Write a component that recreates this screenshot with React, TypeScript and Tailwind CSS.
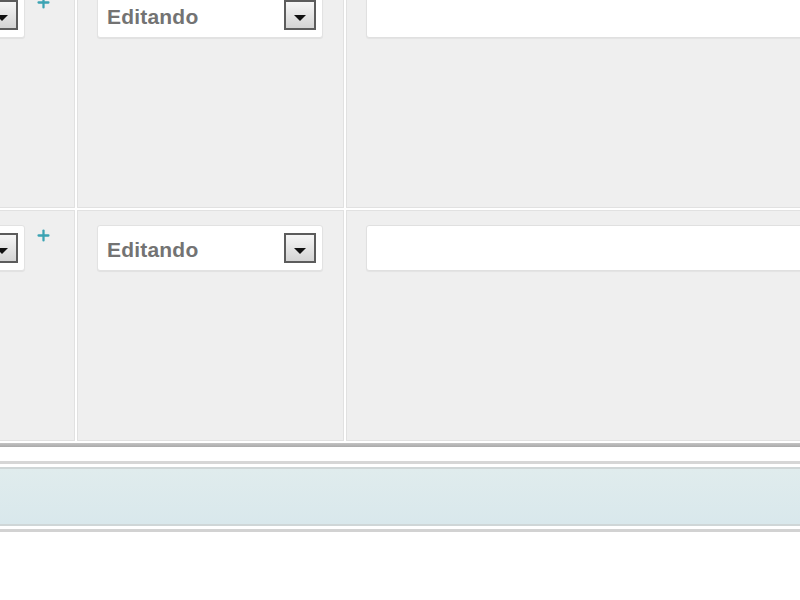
import { Plus } from "lucide-react";

interface RowData {
  status: string;
  note: string;
}

const rows: RowData[] = [
  { status: "Editando", note: "" },
  { status: "Editando", note: "" },
];

function DropButton() {
  return (
    <div className="flex h-[30px] w-[32px] shrink-0 items-end justify-center border-2 border-[#5c5c5c] bg-gradient-to-b from-[#f6f6f6] to-[#d4d4d4] pb-[7px]">
      <div className="h-0 w-0 border-x-[6px] border-t-[6px] border-x-transparent border-t-[#111]" />
    </div>
  );
}

function SelectBox({ value, className }: { value: string; className: string }) {
  return (
    <div
      className={`flex h-[46px] items-center justify-between rounded-[3px] border border-[#e2e2e2] bg-white pl-[9px] pr-[6px] shadow-[0_1px_1px_rgba(0,0,0,0.06)] ${className}`}
    >
      <span className="translate-y-[2px] text-[21px] font-bold tracking-[0.2px] text-[#737373]">{value}</span>
      <DropButton />
    </div>
  );
}

export default function App() {
  return (
    <div className="h-[600px] w-[800px] overflow-hidden bg-white font-['Liberation_Sans',Arial,sans-serif]">
      <div className="-ml-[65px] -mt-[23px] grid w-[900px] grid-cols-[140px_267px_1fr] gap-[2px] bg-white">
        {rows.map((row, index) => (
          <div key={index} className="contents">
            {/* Left cell: cut off select + add icon */}
            <div className="flex h-[231px] items-start gap-[10px] border border-[#e1e1e1] bg-[#efefef] pl-[15px] pt-[14px]">
              <SelectBox value="" className="w-[74px]" />
              <Plus className="mt-[2px] h-[17px] w-[17px] text-[#3ba3b3]" strokeWidth={3.2} />
            </div>

            {/* Status select */}
            <div className="h-[231px] border border-[#e1e1e1] bg-[#efefef] pl-[19px] pt-[14px]">
              <SelectBox value={row.status} className="w-[226px]" />
            </div>

            {/* Note input */}
            <div className="h-[231px] border border-[#e1e1e1] bg-[#efefef] pl-[19px] pt-[14px]">
              <div className="h-[46px] w-full rounded-[3px] border border-[#e0e0e0] bg-white shadow-[0_1px_1px_rgba(0,0,0,0.05)]">
                {row.note}
              </div>
            </div>
          </div>
        ))}
      </div>

      {/* Footer strips */}
      <div className="mt-[2px] h-[4px] bg-gradient-to-b from-[#c4c4c4] to-[#a9a9a9]" />
      <div className="h-[14px] bg-white" />
      <div className="h-[3px] bg-[#d6d6d6]" />
      <div className="h-[3px] bg-white" />
      <div className="h-[59px] border-y-2 border-[#cfd6d7] bg-gradient-to-b from-[#e0eced] to-[#d9e8ec]" />
      <div className="h-[3px] bg-white" />
      <div className="h-[3px] bg-[#d2d2d2]" />
    </div>
  );
}
